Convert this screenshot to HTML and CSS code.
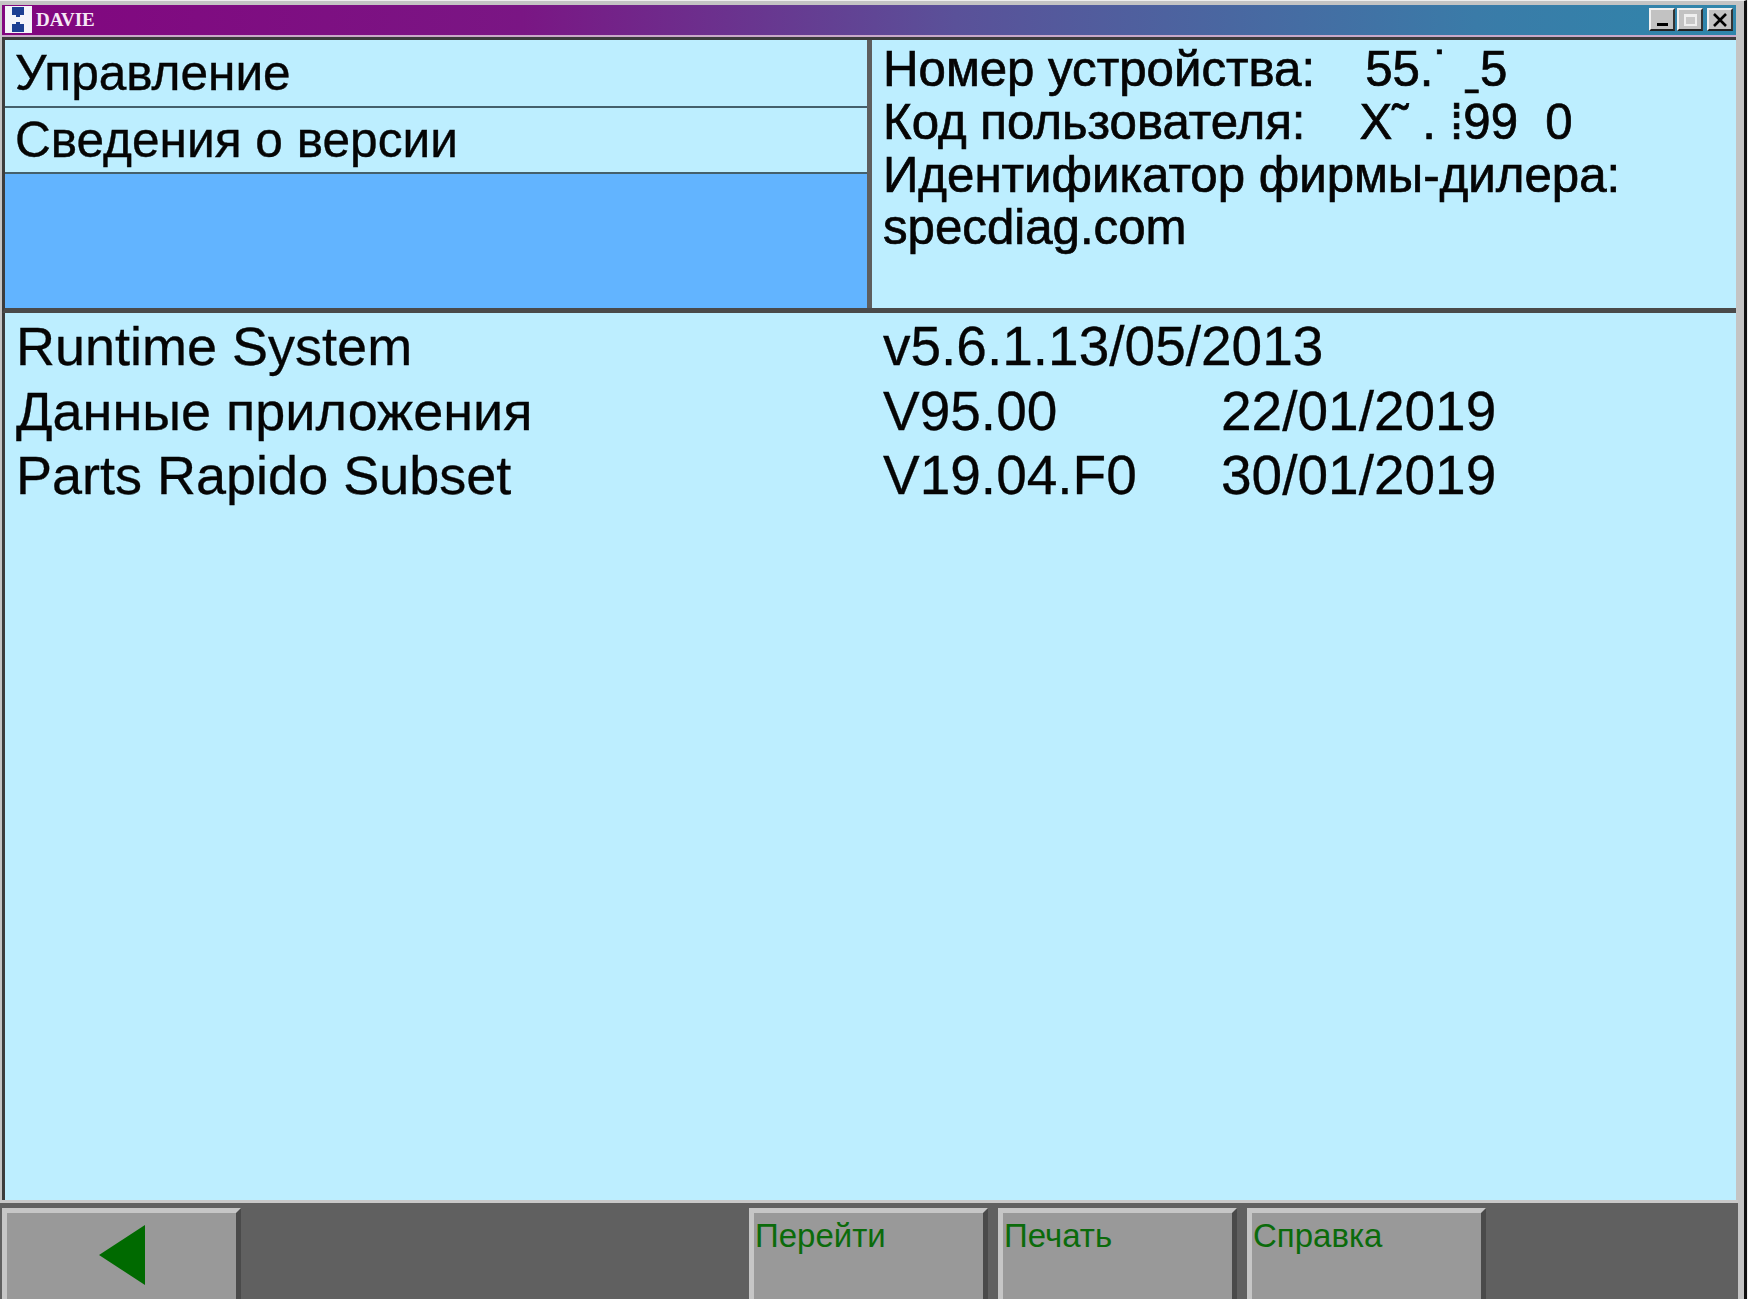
FILE: index.html
```html
<!DOCTYPE html>
<html lang="ru">
<head>
<meta charset="utf-8">
<title>DAVIE</title>
<link rel="stylesheet" href="styles.css">
</head>
<body>
<div class="window">
  <header class="titlebar">
    <svg class="logo" viewBox="0 0 27 27" aria-hidden="true">
      <rect width="27" height="27" fill="#f4f4fa"/>
      <path d="M7 1h12v8H15v2H11V9H7zM7 26h12v-8H15v-2H11v2H7z" fill="#1d3f92"/>
    </svg>
    <span class="app-name">DAVIE</span>
    <div class="win-buttons">
      <button class="win-btn"><span class="glyph-min"></span></button>
      <button class="win-btn disabled"><span class="glyph-max"></span></button>
      <button class="win-btn close-btn">
        <svg viewBox="0 0 16 16" class="glyph-close" aria-hidden="true"><path d="M2 2L14 14M14 2L2 14" stroke="#000" stroke-width="2.6"/></svg>
      </button>
    </div>
  </header>

  <section class="top">
    <div class="menu">
      <div class="menu-row">Управление</div>
      <div class="menu-row">Сведения о версии</div>
      <div class="menu-fill"></div>
    </div>
    <div class="info">
      <div class="info-line">Номер устройства:<span class="val-a">55.˙ ˍ5</span></div>
      <div class="info-line">Код пользователя:<span class="val-b">X˜ . ⁞99  0</span></div>
      <div class="info-line">Идентификатор фирмы-дилера:</div>
      <div class="info-line">specdiag.com</div>
    </div>
  </section>

  <main class="versions">
    <div class="ver-row"><span class="ver-name">Runtime System</span><span class="ver-no">v5.6.1.13/05/2013</span></div>
    <div class="ver-row"><span class="ver-name">Данные приложения</span><span class="ver-no">V95.00</span><span class="ver-date">22/01/2019</span></div>
    <div class="ver-row"><span class="ver-name">Parts Rapido Subset</span><span class="ver-no">V19.04.F0</span><span class="ver-date">30/01/2019</span></div>
  </main>

  <footer class="toolbar">
    <button class="tool back">
      <svg class="arrow" viewBox="0 0 46 60" aria-hidden="true"><path d="M46 0V60L0 30z" fill="#006a00"/></svg>
    </button>
    <div class="tool-group">
      <button class="tool">Перейти</button>
      <button class="tool">Печать</button>
      <button class="tool">Справка</button>
    </div>
  </footer>
</div>
</body>
</html>
```

FILE: styles.css
```css
* { box-sizing: border-box; }
html, body { margin: 0; height: 100%; }
body { background: #f2f2f2; overflow: hidden; }

.window {
  width: 1747px;
  height: 1299px;
  padding: 4px 8px 0 2px;
  display: flex;
  flex-direction: column;
  background: #c4c4c4;
  border-top: 1px solid #eeeeee;
  border-right: 3px solid #111;
  font-family: "Liberation Sans", Arial, sans-serif;
  color: #050505;
}

.titlebar {
  height: 32px;
  flex: none;
  display: flex;
  align-items: center;
  padding: 0 3px 1px 3px;
  background: linear-gradient(90deg, #82067f 0%, #7a1684 30%, #5a5199 55%, #3a7ba8 85%, #2f86ab 100%);
  border-bottom: 2px solid #c9a9c9;
}
.logo { width: 27px; height: 27px; flex: none; }
.app-name {
  margin-left: 4px;
  font: bold 19px "Liberation Serif", serif;
  color: #f6e8f6;
}
.win-buttons { margin-left: auto; display: flex; gap: 2px; }
.win-btn {
  width: 26px;
  height: 23px;
  padding: 0;
  display: flex;
  align-items: center;
  justify-content: center;
  background: #c2c2c2;
  border: 2px solid;
  border-color: #f0f0f0 #333 #222 #f0f0f0;
}
.close-btn { margin-left: 2px; }
.glyph-min { width: 11px; height: 3px; background: #000; margin-top: 10px; }
.glyph-max { width: 13px; height: 12px; background: #c8c8c8; border: 2px solid #efefef; border-top-width: 3px; }
.glyph-close { width: 16px; height: 16px; }

.top {
  height: 276px;
  flex: none;
  display: flex;
  border-top: 3px solid #3c3c3c;
  border-left: 3px solid #3c3c3c;
  border-bottom: 5px solid #4a4a4a;
}
.menu {
  width: 867px;
  flex: none;
  display: flex;
  flex-direction: column;
  border-right: 5px solid #5e5e5e;
}
.menu-row {
  height: 68px;
  flex: none;
  padding: 0 0 0 10px;
  display: flex;
  align-items: center;
  background: #bdeeff;
  border-bottom: 2px solid #44606c;
  font-size: 49.6px;
  -webkit-text-stroke: 0.4px #050505;
}
.menu-row + .menu-row { height: 66px; }
.menu-fill { flex: 1; background: #62b4ff; }
.info {
  flex: 1;
  padding: 3px 0 0 11px;
  background: #bdeeff;
  font-size: 49.2px;
  -webkit-text-stroke: 0.7px #050505;
}
.info-line { height: 52.8px; line-height: 52.8px; white-space: pre; }
.val-a { margin-left: 50px; }
.val-b { margin-left: 54px; }

.versions {
  flex: 1;
  padding: 1px 0 0 11px;
  background: #bdeeff;
  border-left: 3px solid #3c3c3c;
  font-size: 54px;
  -webkit-text-stroke: 0.3px #050505;
}
.ver-row { height: 64.5px; line-height: 64.5px; display: flex; }
.ver-name { width: 867px; flex: none; }
.ver-no { width: 338px; flex: none; font-size: 55px; }
.ver-date { font-size: 55px; }

.toolbar {
  height: 99px;
  flex: none;
  display: flex;
  padding-top: 5px;
  padding-left: 2px;
  margin-left: -2px;
  margin-right: -2px;
  background: #606060;
  border-top: 3px solid #c8c8c8;
}
.tool-group { margin-left: 508px; display: flex; gap: 10px; }
.tool {
  width: 239px;
  height: 100%;
  padding: 4px 0 0 1px;
  display: flex;
  align-items: flex-start;
  background: #999999;
  border: 5px solid;
  border-color: #c6c6c6 #4a4a4a #999 #c6c6c6;
  border-bottom: 0;
  font: 33px "Liberation Sans", Arial, sans-serif;
  color: #0b6b0b;
}
.back { padding: 12px 0 0 92px; }
.arrow { width: 46px; height: 60px; display: block; }
```
